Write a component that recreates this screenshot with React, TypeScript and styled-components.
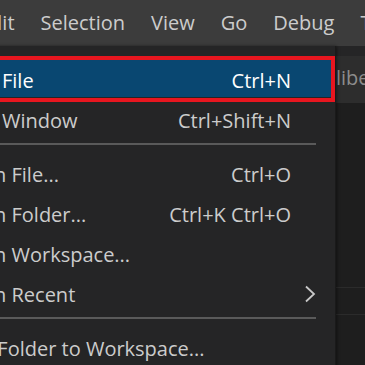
import React from 'react';
import styled, { createGlobalStyle } from 'styled-components';

const GlobalStyle = createGlobalStyle`
  html, body {
    margin: 0;
    padding: 0;
    background: #1e1e1e;
    overflow: hidden;
  }
`;

const Window = styled.div`
  position: relative;
  width: 365px;
  height: 365px;
  overflow: hidden;
  font-family: 'Open Sans', 'Noto Sans', sans-serif;
  background: #1e1e1e;
  display: flex;
  flex-direction: column;
`;

const MenuBar = styled.div`
  height: 46px;
  flex: none;
  background: #3c3c3c;
  display: flex;
  align-items: center;
  gap: 26px;
  margin-left: -21px;
  color: #cccccc;
  font-size: 20px;
  white-space: nowrap;
`;

const MenuTitle = styled.span`
  line-height: 46px;
`;

const TabBar = styled.div`
  height: 57px;
  flex: none;
  background: #252526;
  display: flex;
  align-items: flex-end;
`;

const Tab = styled.div`
  height: 47px;
  margin-left: 336px;
  flex: 1;
  background: #2d2d2d;
  color: #8c8c8c;
  font-size: 20px;
  line-height: 44px;
  white-space: nowrap;
  overflow: hidden;
`;

const Editor = styled.div`
  flex: 1;
  background: #1e1e1e;
  padding-top: 184px;
`;

const CurrentLine = styled.div`
  height: 26px;
  border-top: 1px solid #2b2b2b;
  border-bottom: 1px solid #2b2b2b;
`;

const Menu = styled.div`
  position: absolute;
  top: 46px;
  left: -60px;
  width: 395px;
  bottom: -20px;
  background: #252526;
  box-shadow: 1px 0 0 #1a1a1a, 2px 0 3px rgba(0, 0, 0, 0.45);
  padding-top: 13px;
  color: #cccccc;
  font-size: 20px;
`;

const Item = styled.div<{ $active?: boolean }>`
  position: relative;
  height: 38px;
  margin-bottom: 2px;
  box-sizing: border-box;
  padding: 4px 44px 0 15px;
  display: flex;
  align-items: center;
  white-space: nowrap;
  background: ${(p) => (p.$active ? '#094771' : 'transparent')};
  color: ${(p) => (p.$active ? '#ffffff' : '#cccccc')};

  &::after {
    content: '';
    display: ${(p) => (p.$active ? 'block' : 'none')};
    position: absolute;
    top: -3px;
    bottom: -5px;
    left: 0;
    right: 0;
    border: 4px solid #e8161f;
  }
`;

const Label = styled.span`
  flex: 1;
`;

const Shortcut = styled.span`
  text-align: right;
`;

const Chevron = styled.svg`
  width: 12px;
  height: 18px;
  margin-right: -25px;
`;

const Separator = styled.div`
  height: 2px;
  background: #5a5a5a;
  margin: 6px 19px 8px 60px;
`;

type Entry = { label: string; shortcut?: string; sub?: boolean; active?: boolean } | 'sep';

const entries: Entry[] = [
  { label: 'New File', shortcut: 'Ctrl+N', active: true },
  { label: 'New Window', shortcut: 'Ctrl+Shift+N' },
  'sep',
  { label: 'Open File...', shortcut: 'Ctrl+O' },
  { label: 'Open Folder...', shortcut: 'Ctrl+K Ctrl+O' },
  { label: 'Open Workspace...' },
  { label: 'Open Recent', sub: true },
  'sep',
  { label: 'Add Folder to Workspace...' },
];

export default function App() {
  return (
    <Window>
      <GlobalStyle />
      <MenuBar>
        <MenuTitle>Edit</MenuTitle>
        <MenuTitle>Selection</MenuTitle>
        <MenuTitle>View</MenuTitle>
        <MenuTitle>Go</MenuTitle>
        <MenuTitle>Debug</MenuTitle>
        <MenuTitle>Terminal</MenuTitle>
      </MenuBar>
      <TabBar>
        <Tab>liberty.ts</Tab>
      </TabBar>
      <Editor>
        <CurrentLine />
      </Editor>
      <Menu>
        {entries.map((e, i) =>
          e === 'sep' ? (
            <Separator key={i} />
          ) : (
            <Item key={i} $active={e.active}>
              <Label>{e.label}</Label>
              {e.shortcut && <Shortcut>{e.shortcut}</Shortcut>}
              {e.sub && (
                <Chevron viewBox="0 0 12 18">
                  <path d="M2 1.5 L10 9 L2 16.5" fill="none" stroke="#c8c8c8" strokeWidth="1.8" />
                </Chevron>
              )}
            </Item>
          )
        )}
      </Menu>
    </Window>
  );
}
